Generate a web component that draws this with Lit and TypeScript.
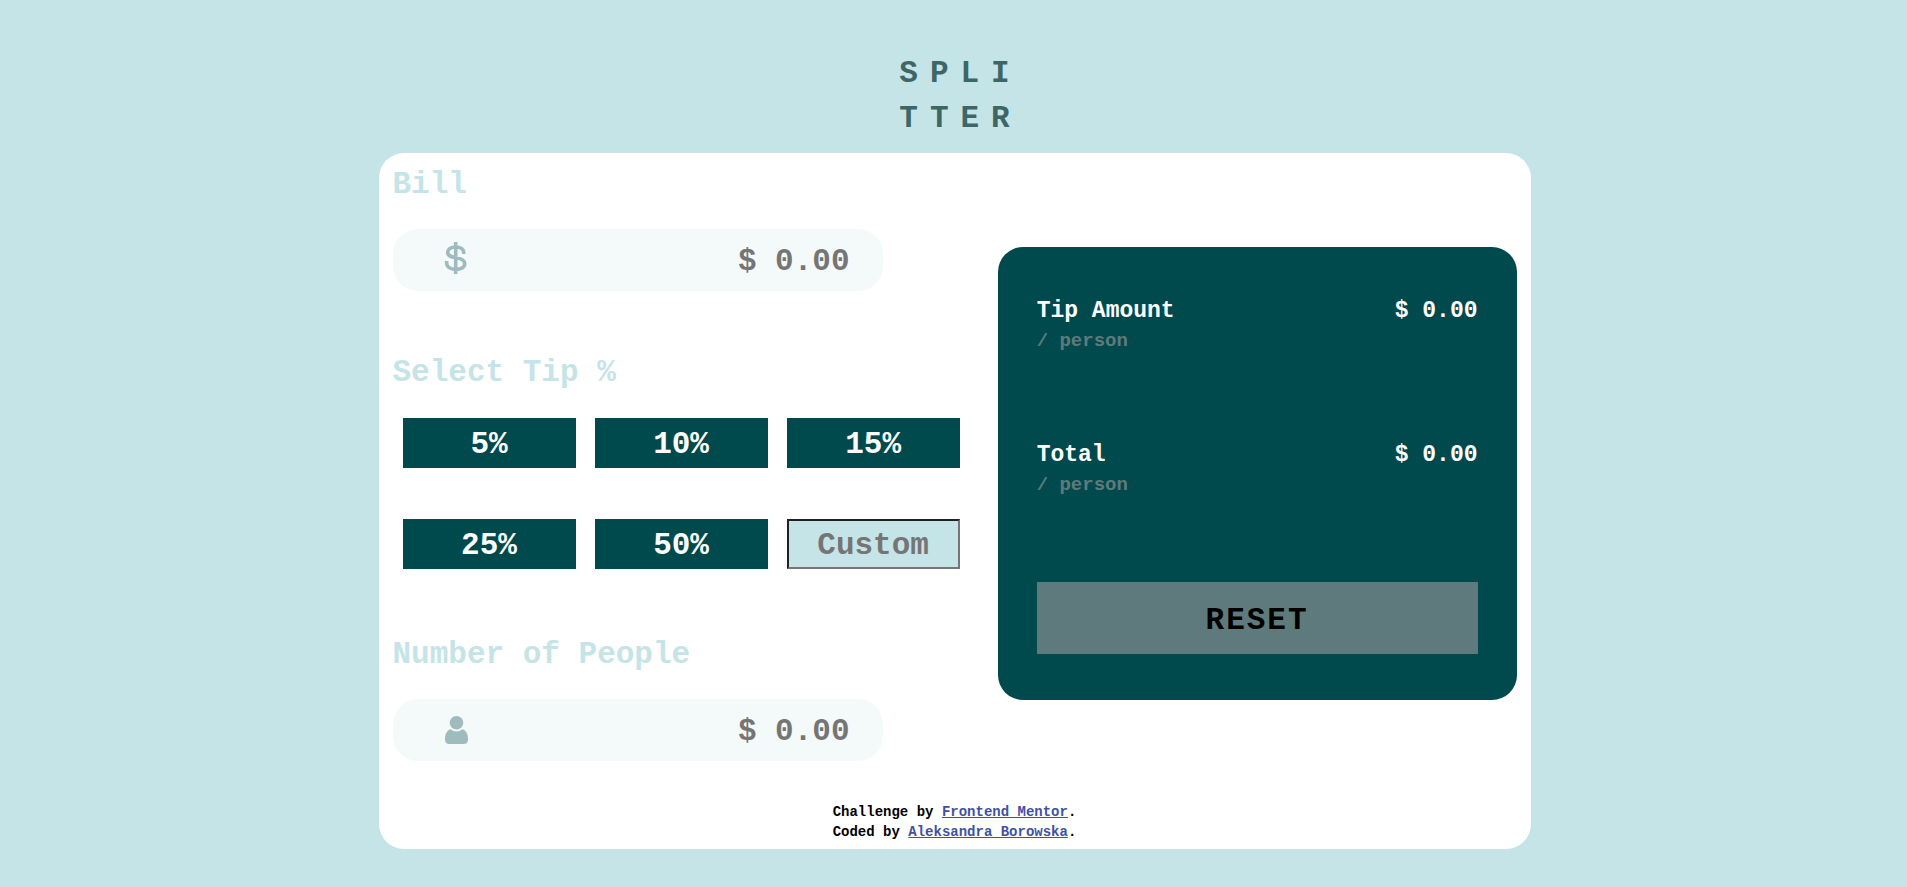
import { LitElement, html, css, svg } from "lit";
import { customElement, state } from "lit/decorators.js";
import { classMap } from "lit/directives/class-map.js";

const TIPS = [5, 10, 15, 25, 50];

const dollarIcon = svg`
  <svg class="icon" viewBox="0 0 24 32" width="24" height="32" aria-hidden="true">
    <path d="M11.700 0V32M19.700 12V11C19.700 7.200 16.400 5 11.700 5S3.600 7.200 3.600 10.300C3.600 14 7 14.800 11.700 15.600S20.700 17.600 20.700 21.800C20.700 25.400 17 27.400 11.700 27.400S2.600 25 2.600 20.500V19"
      fill="none" stroke="#9ebbbd" stroke-width="3.600" />
  </svg>`;

const personIcon = svg`
  <svg class="icon" viewBox="0 -2 24 32" width="24" height="32" aria-hidden="true">
    <circle cx="12.500" cy="8.700" r="6.800" fill="#9ebbbd" />
    <path d="M6.800 15.200C2.500 16.200 1 20.500 1 25.500C1 28.500 2.800 30 5.400 30H19.600C22.200 30 24 28.500 24 25.500C24 20.500 22.500 16.200 18.200 15.200C14.800 18.200 10.200 18.200 6.800 15.200Z" fill="#9ebbbd" />
  </svg>`;

@customElement("app-root")
export class AppRoot extends LitElement {
  @state() private bill = "";
  @state() private people = "";
  @state() private custom = "";
  @state() private tip = 0;

  static styles = css`
    :host {
      display: block;
      box-sizing: border-box;
      min-height: 100vh;
      padding: 51px 8px 38px 10px;
      background: #c5e4e7;
      color: #000;
      font: bold 31px/45px "Liberation Mono", monospace;
    }
    * {
      box-sizing: border-box;
    }
    h1,
    p,
    fieldset {
      margin: 0;
      padding: 0;
      border: 0;
      min-width: 0;
      font: inherit;
    }
    button,
    input {
      margin: 0;
      padding: 2px 0 0;
      border: 0;
      border-radius: 0;
      font: inherit;
    }
    button {
      cursor: pointer;
    }
    .logo {
      padding-left: 12px;
      margin-bottom: 12px;
      color: #3d6666;
      letter-spacing: 12px;
      text-align: center;
    }
    .line {
      display: block;
    }
    .card {
      max-width: 1152px;
      margin: 0 auto;
      padding: 0 14px 7px;
      border-radius: 25px;
      background: #fff;
    }
    .columns {
      display: grid;
      grid-template-columns: 28fr 25fr;
      column-gap: 24px;
      align-items: center;
    }
    .form {
      padding: 9px 0 33px;
    }
    .label {
      display: block;
      padding: 0;
      margin-bottom: 22px;
      color: #c5e4e7;
    }
    .field {
      display: flex;
      align-items: center;
      max-width: 490px;
      height: 62px;
      padding: 0 33px 0 51px;
      border-radius: 25px;
      background: #f4fafa;
    }
    .icon {
      flex: none;
      margin-bottom: 4px;
    }
    .amount {
      flex: 1;
      min-width: 0;
      background: none;
      color: #00494d;
      text-align: right;
      outline: none;
    }
    .amount::placeholder,
    .custom::placeholder {
      color: #757575;
      opacity: 1;
    }
    .tips {
      margin: 59px 0 63px;
    }
    .options {
      display: grid;
      grid-template-columns: repeat(3, minmax(0, 1fr));
      gap: 51px 19px;
      padding: 1px 14px 0 10px;
    }
    .tip {
      height: 50px;
      background: #00494d;
      color: #fff;
    }
    .tip.active {
      background: #26c2ad;
      color: #00494d;
    }
    .custom {
      width: 100%;
      height: 50px;
      border: 2px inset #767676;
      background: #c5e4e7;
      color: #00494d;
      text-align: center;
    }
    .panel {
      padding: 47px 39px 46px;
      border-radius: 25px;
      background: #00494d;
      color: #fff;
    }
    .result {
      display: flex;
      justify-content: space-between;
      margin-bottom: 85px;
      font-size: 23px;
      line-height: 35px;
    }
    .per {
      display: block;
      color: #5e7a7d;
      font-size: 19px;
      line-height: 24px;
    }
    .reset {
      display: block;
      width: 100%;
      height: 72px;
      padding-top: 4px;
      background: #5e7a7d;
      color: #000;
      letter-spacing: 2px;
    }
    .footer {
      margin-top: 8px;
      font-size: 14px;
      line-height: 20px;
      display: flex;
      justify-content: center;
    }
    .footer a {
      color: #3e52a3;
    }
    @media (max-width: 1000px) {
      .columns {
        grid-template-columns: minmax(0, 1fr);
      }
    }
  `;

  private share(base: number): string {
    const n = Number(this.people) || 0;
    return "$ " + (n > 0 ? base / n : 0).toFixed(2);
  }

  private reset() {
    this.bill = "";
    this.people = "";
    this.custom = "";
    this.tip = 0;
  }

  private choose(value: number) {
    this.tip = value;
    this.custom = "";
  }

  render() {
    const bill = Number(this.bill) || 0;
    const rate = (this.custom ? Number(this.custom) || 0 : this.tip) / 100;
    return html`
      <h1 class="logo"><span class="line">SPLI</span><span class="line">TTER</span></h1>
      <main class="card">
        <div class="columns">
          <form class="form" @submit=${(e: Event) => e.preventDefault()}>
            <label class="label" for="bill">Bill</label>
            <div class="field">
              ${dollarIcon}
              <input class="amount" id="bill" inputmode="decimal" placeholder="$ 0.00" .value=${this.bill}
                @input=${(e: Event) => (this.bill = (e.target as HTMLInputElement).value)} />
            </div>
            <fieldset class="tips">
              <legend class="label">Select Tip %</legend>
              <div class="options">
                ${TIPS.map((t) => html`
                  <button type="button" class=${classMap({ tip: true, active: this.tip === t })}
                    @click=${() => this.choose(t)}>${t}%</button>`)}
                <input class="custom" aria-label="Custom" inputmode="decimal" placeholder="Custom" .value=${this.custom}
                  @input=${(e: Event) => { this.custom = (e.target as HTMLInputElement).value; this.tip = 0; }} />
              </div>
            </fieldset>
            <label class="label" for="people">Number of People</label>
            <div class="field">
              ${personIcon}
              <input class="amount" id="people" inputmode="numeric" placeholder="$ 0.00" .value=${this.people}
                @input=${(e: Event) => (this.people = (e.target as HTMLInputElement).value)} />
            </div>
          </form>
          <section class="panel">
            <div class="result">
              <p>Tip Amount<span class="per">/ person</span></p>
              <output>${this.share(bill * rate)}</output>
            </div>
            <div class="result">
              <p>Total<span class="per">/ person</span></p>
              <output>${this.share(bill * (1 + rate))}</output>
            </div>
            <button type="button" class="reset" @click=${this.reset}>RESET</button>
          </section>
        </div>
        <footer class="footer">
          <p>
            <span class="line">Challenge by <a href="https://www.frontendmentor.io">Frontend Mentor</a>.</span>
            <span class="line">Coded by <a href="#">Aleksandra Borowska</a>.</span>
          </p>
        </footer>
      </main>
    `;
  }
}
